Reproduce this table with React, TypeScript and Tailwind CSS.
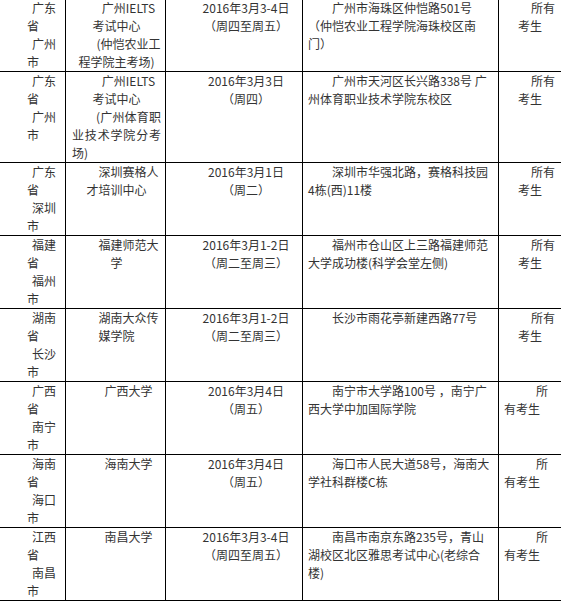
import React from "react";

type Line = { t: string; c?: string };
type Row = { c1: Line[]; c2: Line[]; c3: Line[]; c4: Line[]; c5: Line[] };

const prov = (a: string, b: string): Line[] => [
  { t: a, c: "pl-[32px]" },
  { t: "省", c: "pl-[27px]" },
  { t: b, c: "pl-[32px]" },
  { t: "市", c: "pl-[27px]" },
];

const allA: Line[] = [
  { t: "所有", c: "pl-[32px]" },
  { t: "考生", c: "pl-[19px]" },
];
const allB: Line[] = [
  { t: "所", c: "pl-[37px]" },
  { t: "有考生", c: "pl-[5px]" },
];

const date = (a: string, b: string): Line[] => [
  { t: a, c: "text-center pl-[24px]" },
  { t: b, c: "text-center pl-[24px]" },
];

const rows: Row[] = [
  {
    c1: prov("广东", "广州"),
    c2: [
      { t: "广州IELTS", c: "text-center pl-[24px]" },
      { t: "考试中心", c: "text-center" },
      { t: "(仲恺农业工", c: "text-center pl-[24px]" },
      { t: "程学院主考场)", c: "text-center" },
    ],
    c3: date("2016年3月3-4日", "（周四至周五）"),
    c4: [
      { t: "广州市海珠区仲恺路501号", c: "pl-[24px]" },
      { t: "（仲恺农业工程学院海珠校区南" },
      { t: "门）" },
    ],
    c5: allA,
  },
  {
    c1: prov("广东", "广州"),
    c2: [
      { t: "广州IELTS", c: "text-center pl-[24px]" },
      { t: "考试中心", c: "text-center" },
      { t: "(广州体育职", c: "pl-[24px] text-justify [text-align-last:justify]" },
      { t: "业技术学院分考", c: "text-justify [text-align-last:justify]" },
      { t: "场)", c: "text-left" },
    ],
    c3: date("2016年3月3日", "（周四）"),
    c4: [
      { t: "广州市天河区长兴路338号 广", c: "pl-[24px]" },
      { t: "州体育职业技术学院东校区" },
    ],
    c5: allA,
  },
  {
    c1: prov("广东", "深圳"),
    c2: [
      { t: "深圳赛格人", c: "text-center pl-[24px]" },
      { t: "才培训中心", c: "text-center" },
    ],
    c3: date("2016年3月1日", "（周二）"),
    c4: [
      { t: "深圳市华强北路，赛格科技园", c: "pl-[24px]" },
      { t: "4栋(西)11楼" },
    ],
    c5: allA,
  },
  {
    c1: prov("福建", "福州"),
    c2: [
      { t: "福建师范大", c: "text-center pl-[24px]" },
      { t: "学", c: "text-center" },
    ],
    c3: date("2016年3月1-2日", "（周二至周三）"),
    c4: [
      { t: "福州市仓山区上三路福建师范", c: "pl-[24px]" },
      { t: "大学成功楼(科学会堂左侧)" },
    ],
    c5: allA,
  },
  {
    c1: prov("湖南", "长沙"),
    c2: [
      { t: "湖南大众传", c: "text-center pl-[24px]" },
      { t: "媒学院", c: "text-center" },
    ],
    c3: date("2016年3月1-2日", "（周二至周三）"),
    c4: [{ t: "长沙市雨花亭新建西路77号", c: "pl-[24px]" }],
    c5: allA,
  },
  {
    c1: prov("广西", "南宁"),
    c2: [{ t: "广西大学", c: "text-center pl-[24px]" }],
    c3: date("2016年3月4日", "（周五）"),
    c4: [
      { t: "南宁市大学路100号 ，南宁广", c: "pl-[24px]" },
      { t: "西大学中加国际学院" },
    ],
    c5: allB,
  },
  {
    c1: prov("海南", "海口"),
    c2: [{ t: "海南大学", c: "text-center pl-[24px]" }],
    c3: date("2016年3月4日", "（周五）"),
    c4: [
      { t: "海口市人民大道58号，海南大", c: "pl-[24px]" },
      { t: "学社科群楼C栋" },
    ],
    c5: allB,
  },
  {
    c1: prov("江西", "南昌"),
    c2: [{ t: "南昌大学", c: "text-center pl-[24px]" }],
    c3: date("2016年3月3-4日", "（周四至周五）"),
    c4: [
      { t: "南昌市南京东路235号，青山", c: "pl-[24px]" },
      { t: "湖校区北区雅思考试中心(老综合" },
      { t: "楼)" },
    ],
    c5: allB,
  },
];

function Cell({ lines, cls }: { lines: Line[]; cls: string }) {
  return (
    <div role="cell" className={"border-r border-black " + cls}>
      {lines.map((l, i) => (
        <div key={i} className={"whitespace-nowrap " + (l.c ?? "")}>
          {l.t}
        </div>
      ))}
    </div>
  );
}

export default function App() {
  return (
    <div className="w-[561px] h-[601px] overflow-hidden bg-white">
      <div
        role="table"
        className="-mt-px w-[579px] font-['Noto_Sans_CJK_SC',sans-serif] text-[12px] leading-[18px] text-[#333333] [text-spacing-trim:space-all]"
      >
        {rows.map((r, i) => (
          <div
            key={i}
            role="row"
            className="grid grid-cols-[66px_100px_137px_196px_80px] border-b border-black"
          >
            <Cell lines={r.c1} cls="" />
            <Cell lines={r.c2} cls="pl-[6px] pr-[4px]" />
            <Cell lines={r.c3} cls="px-[6px]" />
            <Cell lines={r.c4} cls="pl-[5px]" />
            <Cell lines={r.c5} cls="" />
          </div>
        ))}
      </div>
    </div>
  );
}
